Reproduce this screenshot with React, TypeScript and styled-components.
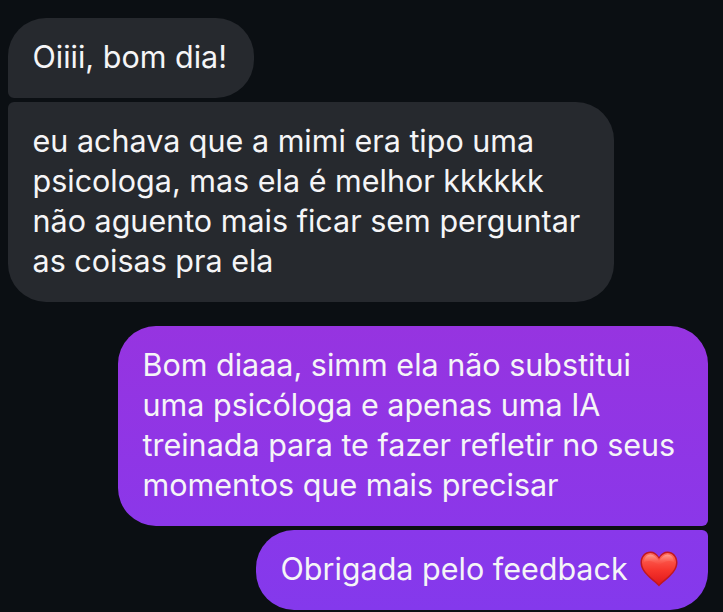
import React from "react";
import styled, { createGlobalStyle } from "styled-components";

const GlobalStyle = createGlobalStyle`
  html, body {
    margin: 0;
    padding: 0;
    background: #0b0f13;
  }
`;

const Thread = styled.div`
  width: 723px;
  height: 612px;
  box-sizing: border-box;
  padding: 18px 15px 0 8px;
  display: flex;
  flex-direction: column;
  background: #0b0f13;
  overflow: hidden;
  font-family: Inter, "Liberation Sans", sans-serif;
`;

const Bubble = styled.div<{
  $mine?: boolean;
  $radius: string;
  $top: number;
  $width: number;
  $from?: string;
  $to?: string;
}>`
  align-self: ${(p) => (p.$mine ? "flex-end" : "flex-start")};
  box-sizing: border-box;
  width: ${(p) => p.$width}px;
  margin-top: ${(p) => p.$top}px;
  padding: 19px 0 21px 24.5px;
  border-radius: ${(p) => p.$radius};
  color: #f5f5f7;
  font-size: 30.5px;
  font-weight: 400;
  line-height: 40px;
  white-space: nowrap;
  background: ${(p) =>
    p.$mine ? `linear-gradient(180deg, ${p.$from} 0%, ${p.$to} 100%)` : "#26292e"};
`;

const Heart = styled.svg`
  display: inline-block;
  width: 38px;
  height: 36px;
  margin-left: 12px;
  vertical-align: -7px;
`;

export default function App() {
  return (
    <>
      <GlobalStyle />
      <Thread>
        <Bubble $top={0} $width={246} $radius="38px 38px 38px 6px">
          Oiiii, bom dia!
        </Bubble>
        <Bubble $top={4} $width={606} $radius="6px 38px 38px 38px">
          eu achava que a mimi era tipo uma
          <br />
          psicologa, mas ela é melhor kkkkkk
          <br />
          não aguento mais ficar sem perguntar
          <br />
          as coisas pra ela
        </Bubble>
        <Bubble
          $mine
          $top={24}
          $width={590}
          $radius="38px 38px 6px 38px"
          $from="#9634e0"
          $to="#8b37e9"
        >
          Bom diaaa, simm ela não substitui
          <br />
          uma psicóloga e apenas uma IA
          <br />
          treinada para te fazer refletir no seus
          <br />
          momentos que mais precisar
        </Bubble>
        <Bubble
          $mine
          $top={4}
          $width={452}
          $radius="38px 6px 38px 38px"
          $from="#8938ea"
          $to="#8439ec"
        >
          Obrigada pelo feedback
          <Heart viewBox="0 0 38 36" aria-hidden="true">
            <defs>
              <linearGradient id="heartFill" x1="0" y1="0" x2="0" y2="1">
                <stop offset="0" stopColor="#ff6a5c" />
                <stop offset="0.55" stopColor="#f6352c" />
                <stop offset="1" stopColor="#e0181c" />
              </linearGradient>
              <linearGradient id="heartShine" x1="0" y1="0" x2="0" y2="1">
                <stop offset="0" stopColor="#ffb0a4" stopOpacity="0.75" />
                <stop offset="1" stopColor="#ff6a5c" stopOpacity="0" />
              </linearGradient>
            </defs>
            <path
              d="M19 35.500C17 33 12 29.500 7.500 25C3 20.500 0.500 16.500 0.500 11.500C0.500 5 5 0.500 10.500 0.500C14 0.500 17 2.500 19 6C21 2.500 24 0.500 27.500 0.500C33 0.500 37.500 5 37.500 11.500C37.500 16.500 35 20.500 30.500 25C26 29.500 21 33 19 35.500Z"
              fill="#c0181f"
            />
            <path
              d="M19 33.500C17 31 12.500 28 8.500 24C4.500 20 2 16 2 11.500C2 6 6 2 10.500 2C14 2 17 4.500 19 8C21 4.500 24 2 27.500 2C32 2 36 6 36 11.500C36 16 33.500 20 29.500 24C25.500 28 21 31 19 33.500Z"
              fill="url(#heartFill)"
            />
            <path
              d="M4 11C4 6.500 7 3.500 10.500 3.500C13.500 3.500 16.500 6 19 10C21.500 6 24.500 3.500 27.500 3.500C31 3.500 34 6.500 34 11C28 8.500 24 11 19 14C14 11 10 8.500 4 11Z"
              fill="url(#heartShine)"
            />
          </Heart>
        </Bubble>
      </Thread>
    </>
  );
}
